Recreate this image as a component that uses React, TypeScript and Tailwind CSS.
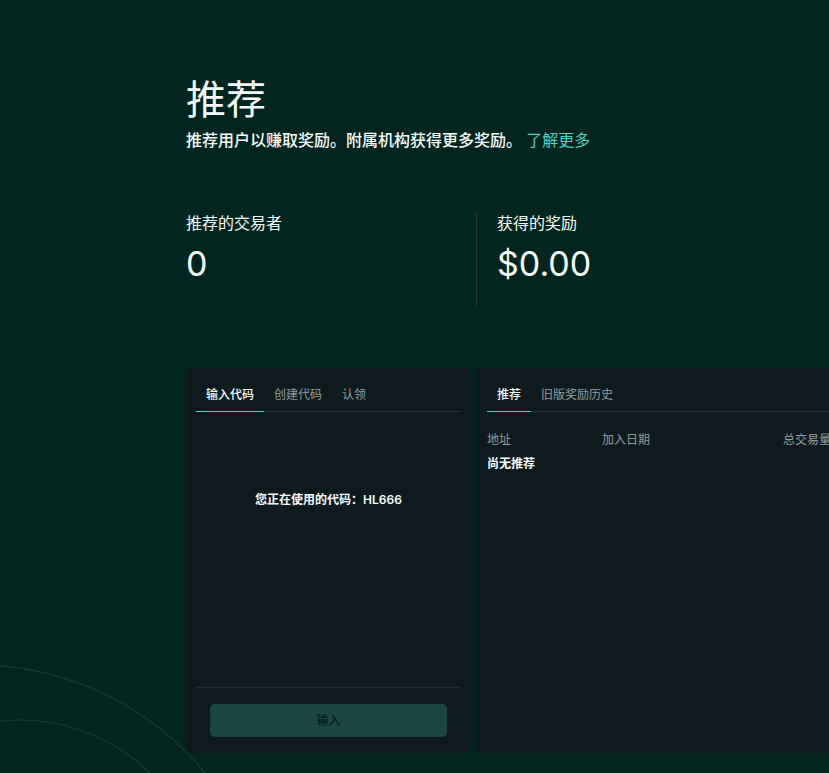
import React from "react";

const font = "font-['Inter','Noto_Sans_CJK_SC',sans-serif]";

function Tabs({ items, active }: { items: string[]; active: number }) {
  return (
    <div className="flex border-b border-[#2e3335]">
      {items.map((t, i) => (
        <div
          key={t}
          className={
            i === active
              ? "-mb-px flex h-[34px] items-center border-b border-[#50d2c1] px-[10px] text-[12px] font-medium text-[#f6fefd]"
              : "-mb-px flex h-[34px] items-center border-b border-transparent px-[10px] text-[12px] text-[#949e9c]"
          }
        >
          {t}
        </div>
      ))}
    </div>
  );
}

export default function App() {
  return (
    <div className={`relative h-screen w-full overflow-hidden bg-[#03251f] text-[#f6fefd] ${font}`}>
      <svg className="pointer-events-none absolute inset-0 h-full w-full" viewBox="0 0 829 773" preserveAspectRatio="none">
        <circle cx="-23" cy="960" r="295" fill="none" stroke="#143d36" strokeWidth="1.2" />
        <circle cx="20" cy="905" r="185" fill="none" stroke="#143d36" strokeWidth="1.2" />
      </svg>
      <div className="relative pl-[186px] pt-[76px]">
        <h1 className="text-[40px] leading-[48px] font-normal">推荐</h1>
        <p className="mt-[4px] text-[16px] leading-[24px] font-medium">
          推荐用户以赚取奖励。附属机构获得更多奖励。{" "}
          <span className="font-normal text-[#50d2c1]">了解更多</span>
        </p>

        <div className="mt-[61px] flex">
          <div className="h-[93px] w-[291px] border-r border-[#1b4039]">
            <div className="text-[16px] leading-[20px]">推荐的交易者</div>
            <div className="mt-[9px] text-[34px] leading-[44px]">0</div>
          </div>
          <div className="h-[93px] pl-[20px]">
            <div className="text-[16px] leading-[20px]">获得的奖励</div>
            <div className="mt-[9px] text-[34px] leading-[44px]">$0.00</div>
          </div>
        </div>

        <div className="mt-[62px] flex gap-[6px]">
          <div className="flex h-[385px] w-[285px] shrink-0 flex-col rounded-[5px] bg-[#0f1a1f] p-[10px]">
            <Tabs items={["输入代码", "创建代码", "认领"]} active={0} />
            <div className="flex-1">
              <div className="mt-[80px] text-center text-[12px] leading-[16px] font-semibold">
                您正在使用的代码：HL666
              </div>
            </div>
            <div className="border-t border-[#262c2e] pt-[16px] pb-[6px]">
              <div className="mx-[14px] flex h-[33px] items-center justify-center rounded-[5px] bg-[#1a4741] text-[12px] text-[#08140f]">
                输入
              </div>
            </div>
          </div>

          <div className="h-[385px] w-[620px] shrink-0 rounded-[5px] bg-[#0f1a1f] p-[10px]">
            <Tabs items={["推荐", "旧版奖励历史"]} active={0} />
            <div className="mt-[20px] grid grid-cols-[115px_181px_1fr] text-[12px] leading-[16px] text-[#949e9c]">
              <div>地址</div>
              <div>加入日期</div>
              <div>总交易量</div>
            </div>
            <div className="mt-[8px] text-[12px] leading-[16px] font-semibold">尚无推荐</div>
          </div>
        </div>
      </div>
    </div>
  );
}
